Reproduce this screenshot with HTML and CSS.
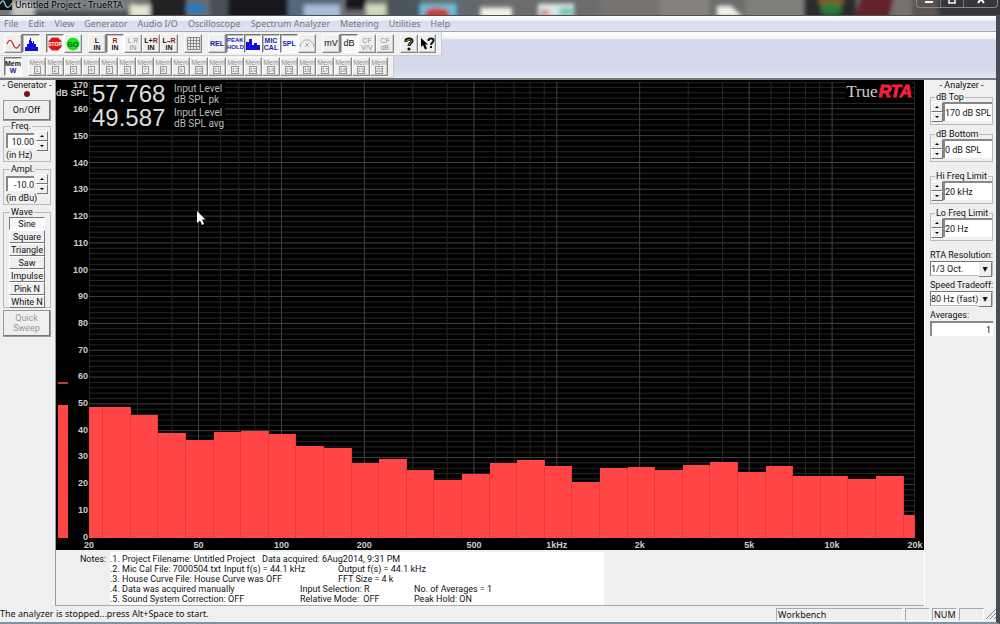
FILE: index.html
```html
<!DOCTYPE html>
<html lang="en">
<head>
  <meta charset="UTF-8">
  <meta name="viewport" content="width=device-width, initial-scale=1.0">
  <title>Untitled Project - TrueRTA</title>
  <link rel="stylesheet" href="styles.css">
</head>
<body>

  <!-- Title bar -->
  <header class="titlebar">
    <svg class="glass" viewBox="0 0 1000 16" preserveAspectRatio="none" aria-hidden="true">
      <defs>
        <filter id="soft" x="-5%" y="-50%" width="110%" height="200%"><feGaussianBlur stdDeviation="2"/></filter>
      </defs>
      <rect width="1000" height="16" fill="#6c6c6c"/>
      <g filter="url(#soft)">
        <rect x="-5" y="-4" width="140" height="24" fill="#74777c"/>
        <rect x="12" y="2" width="22" height="16" fill="#c3c6bd"/>
        <rect x="34" y="12" width="100" height="8" fill="#45484e"/>
        <rect x="130" y="5" width="20" height="13" fill="#e2e8d2"/>
        <rect x="150" y="-4" width="36" height="24" fill="#202124"/>
        <ellipse cx="196" cy="9" rx="10" ry="6" fill="#2d78bd"/>
        <rect x="210" y="-4" width="20" height="24" fill="#4a5058"/>
        <rect x="228" y="-4" width="60" height="24" fill="#17181b"/>
        <rect x="288" y="-4" width="54" height="24" fill="#55677b"/>
        <rect x="304" y="5" width="36" height="14" fill="#a9bdd8"/>
        <rect x="346" y="-4" width="20" height="14" fill="#17181b"/>
        <rect x="366" y="4" width="20" height="14" fill="#cfdabc"/>
        <rect x="387" y="-4" width="34" height="24" fill="#4c545c"/>
        <rect x="420" y="4" width="36" height="14" fill="#62c2df"/>
        <ellipse cx="437" cy="14" rx="13" ry="6" fill="#cb3b3b"/>
        <rect x="456" y="-4" width="26" height="24" fill="#5f6970"/>
        <rect x="481" y="8" width="31" height="12" fill="#f2f2e6"/>
        <rect x="538" y="4" width="36" height="14" fill="#d9ebee"/>
        <ellipse cx="545" cy="13" rx="5" ry="3" fill="#dd7a6d"/>
        <ellipse cx="566" cy="12" rx="8" ry="4" fill="#6cc5a6"/>
        <rect x="600" y="-4" width="60" height="24" fill="#777371"/>
        <rect x="660" y="-4" width="50" height="24" fill="#85827e"/>
        <path d="M717 6h14l12 12h-26z" fill="#f0f4e8"/>
        <rect x="745" y="-4" width="60" height="24" fill="#807e7a"/>
        <rect x="804" y="-4" width="52" height="24" fill="#2c2a29"/>
        <ellipse cx="831" cy="2" rx="13" ry="6" fill="#7a6030"/>
        <ellipse cx="831" cy="10" rx="11" ry="6" fill="#257a3c"/>
        <path d="M862 -4h32l-6 24h-34z" fill="#64202a"/>
        <rect x="894" y="-4" width="30" height="24" fill="#77706c"/>
        <rect x="912" y="-4" width="26" height="24" fill="#5b5552"/>
        <rect x="938" y="-4" width="70" height="24" fill="#34363a"/>
      </g>
    </svg>
    <svg class="app-icon" width="12" height="10" viewBox="0 0 12 10" aria-hidden="true">
      <rect width="12" height="10" fill="#0c1416"/>
      <path d="M0 4c2-4 4-4 5 0s4 5 7-1" fill="none" stroke="#7fc4cc" stroke-width="1.3"/>
    </svg>
    <h1>Untitled Project - TrueRTA</h1>
    <div class="window-buttons">
      <button aria-label="Minimize"><svg width="8" height="8" viewBox="0 0 8 8"><path d="M0 1h8v2H0z" fill="#fff"/></svg></button>
      <button aria-label="Maximize"><svg width="8" height="8" viewBox="0 0 8 8"><path d="M1 0v3h6V0" fill="none" stroke="#fff" stroke-width="1.5"/></svg></button>
      <button class="wide" aria-label="Close"><svg width="8" height="8" viewBox="0 0 8 8"><path d="M4 -1l3 4M4 -1L1 3" stroke="#fff" stroke-width="2"/></svg></button>
    </div>
  </header>

  <div class="window">
    <nav class="menu">
      <a href="#">File</a>
      <a href="#">Edit</a>
      <a href="#">View</a>
      <a href="#">Generator</a>
      <a href="#">Audio I/O</a>
      <a href="#">Oscilloscope</a>
      <a href="#">Spectrum Analyzer</a>
      <a href="#">Metering</a>
      <a href="#">Utilities</a>
      <a href="#">Help</a>
    </nav>

    <!-- Toolbars -->
    <div class="toolbars">
      <div class="toolbar">
        <div class="group">
          <button aria-label="Oscilloscope"><svg width="15" height="12" viewBox="0 0 15 12"><path d="M1 6c2-5 4-5 6 0s4 6 7 0" fill="none" stroke="#c22" stroke-width="1.1"/></svg></button>
          <button class="on" aria-label="Spectrum"><svg width="15" height="14" viewBox="0 0 15 14"><path d="M1 14V10h2V7h2V3h1V1h1v3h1v2h1V4h1v3h2v3h2v4z" fill="#1010d8"/></svg></button>
        </div>
        <div class="group">
          <button class="on" aria-label="Stop"><svg width="14" height="14" viewBox="0 0 14 14"><path d="M4 0.5h6l3.500 3.500v6L10 13.500H4L0.500 10V4z" fill="#d81818"/><text x="7" y="9" text-anchor="middle" class="sign white">STOP</text></svg></button>
          <button aria-label="Go"><svg width="14" height="14" viewBox="0 0 14 14"><circle cx="7" cy="7" r="6.5" fill="#20e020"/><text x="7" y="9.5" text-anchor="middle" class="sign big">GO</text></svg></button>
        </div>
        <div class="group">
          <button>L<br>IN</button>
          <button class="on"><span class="red">R</span><br>IN</button>
          <button disabled>L R<br>IN</button>
          <button>L+<span class="red">R</span><br>IN</button>
          <button>L–<span class="red">R</span><br>IN</button>
        </div>
        <div class="group">
          <button aria-label="Grid"><svg width="13" height="13" viewBox="0 0 13 13"><path d="M0.5 0.5h12v12h-12zM3.5 0v13M6.5 0v13M9.5 0v13M0 3.5h13M0 6.5h13M0 9.5h13" fill="none" stroke="#888"/></svg></button>
        </div>
        <div class="group">
          <button class="blue">REL</button>
          <button class="on blue tiny">PEAK<br>HOLD</button>
          <button class="on" aria-label="Bar graph"><svg width="14" height="12" viewBox="0 0 14 12"><path d="M0 12V4h3V1h3v6h2V5h3v2h3v5z" fill="#1010d8"/></svg></button>
          <button class="on blue">MIC<br>CAL</button>
          <button class="on blue">SPL</button>
          <button disabled aria-label="Weighting"><svg width="14" height="12" viewBox="0 0 14 12"><path d="M0.5 9V6l4-4h5l4 4v3M5 5l4 4M9 5L5 9" fill="none" stroke="#aaa"/></svg></button>
        </div>
        <div class="group">
          <button class="unit">mV</button>
          <button class="on unit">dB</button>
          <button disabled>CF<br>V/V</button>
          <button disabled>CF<br>dB</button>
        </div>
        <div class="group">
          <button aria-label="About"><svg width="12" height="14" viewBox="0 0 12 14"><path d="M3 5V3.5C3 1.5 9 1.5 9 4c0 2-3 2-3 5" fill="none" stroke="#111" stroke-width="3"/><path d="M3 4.500C3 2 8.500 2 8.500 4.200c0 1.500-2.500 2-2.500 4.300" fill="none" stroke="#a8a040" stroke-width="1"/><circle cx="6" cy="12" r="1.6" fill="#111"/></svg></button>
          <button aria-label="Context help"><svg width="15" height="14" viewBox="0 0 15 14"><path d="M1 1v9l2-2 2 4.500 2-1L5.200 7.500H8z" fill="#000"/><path d="M8.500 4V3c0-2 5-2 5 .5C13.500 5.500 11 5.500 11 8" fill="none" stroke="#112" stroke-width="2"/><rect x="10" y="9" width="2" height="2" fill="#112"/></svg></button>
        </div>
      </div>
      <div class="toolbar memory">
        <div class="group">
          <button class="on">Mem<br><span class="navy">W</span></button>
        </div>
        <div class="group" id="memories"></div>
      </div>
    </div>

    <main class="workspace">
      <!-- Generator -->
      <section class="generator">
        <h2>- Generator -</h2>
        <span class="led"></span>
        <button class="push">On/Off</button>

        <fieldset>
          <legend><label for="freq">Freq.</label></legend>
          <div class="spinner">
            <input type="text" id="freq" value="10.00">
            <div class="arrows">
              <button class="up" aria-label="Frequency up"></button>
              <button class="down" aria-label="Frequency down"></button>
            </div>
          </div>
          <p>(in Hz)</p>
        </fieldset>

        <fieldset>
          <legend><label for="ampl">Ampl.</label></legend>
          <div class="spinner">
            <input type="text" id="ampl" value="-10.0">
            <div class="arrows">
              <button class="up" aria-label="Amplitude up"></button>
              <button class="down" aria-label="Amplitude down"></button>
            </div>
          </div>
          <p>(in dBu)</p>
        </fieldset>

        <fieldset class="wave">
          <legend>Wave</legend>
          <button class="on">Sine</button>
          <button>Square</button>
          <button>Triangle</button>
          <button>Saw</button>
          <button>Impulse</button>
          <button>Pink N</button>
          <button>White N</button>
        </fieldset>
        <button class="push sweep" disabled>Quick<br>Sweep</button>
      </section>

      <!-- Spectrum and notes -->
      <section class="center">
        <div class="plot">
          <div class="meter">
            <div class="level" style="height:29.2%"></div>
            <div class="peak" style="bottom:33.7%"></div>
          </div>
          <div class="y-axis" id="y-axis"></div>
          <div class="chart">
            <svg class="grid" id="grid" viewBox="0 0 3 170" preserveAspectRatio="none" aria-hidden="true"></svg>
            <div class="bars" id="bars"></div>
            <div class="readout">
              <span class="value">57.768</span>
              <span class="caption">Input Level<br>dB SPL pk</span>
              <span class="value">49.587</span>
              <span class="caption">Input Level<br>dB SPL avg</span>
            </div>
            <div class="logo"><span>True</span><b>RTA</b></div>
            <svg class="cursor" width="10" height="16" viewBox="0 0 10 16" aria-hidden="true"><path d="M1 1v12l3-2.500L6 15l2-1-2-4.500h3.500z" fill="#fff"/></svg>
          </div>
          <div class="x-axis" id="x-axis"></div>
        </div>
        <div class="notes">
          <label for="notes">Notes:</label>
          <textarea id="notes" rows="5" spellcheck="false" readonly>.1. Project Filename: Untitled Project	Data acquired: 6Aug2014, 9:31 PM
.2. Mic Cal File: 7000504.txt	Input f(s) = 44.1 kHz	Output f(s) = 44.1 kHz
.3. House Curve File: House Curve was OFF		FFT Size = 4 k
.4. Data was acquired manually		Input Selection: R		No. of Averages = 1
.5. Sound System Correction: OFF		Relative Mode:  OFF	Peak Hold: ON</textarea>
        </div>
      </section>

      <!-- Analyzer -->
      <section class="analyzer">
        <h2>- Analyzer -</h2>
        <fieldset>
          <legend><label for="db-top">dB Top</label></legend>
          <div class="spinner">
            <div class="arrows">
              <button class="up" aria-label="dB top up"></button>
              <button class="down" aria-label="dB top down"></button>
            </div>
            <input type="text" id="db-top" value="170 dB SPL">
          </div>
        </fieldset>
        <fieldset>
          <legend><label for="db-bottom">dB Bottom</label></legend>
          <div class="spinner">
            <div class="arrows">
              <button class="up" aria-label="dB bottom up"></button>
              <button class="down" aria-label="dB bottom down"></button>
            </div>
            <input type="text" id="db-bottom" value="0 dB SPL">
          </div>
        </fieldset>
        <fieldset class="spaced">
          <legend><label for="hi-freq">Hi Freq Limit</label></legend>
          <div class="spinner">
            <div class="arrows">
              <button class="up" aria-label="High limit up"></button>
              <button class="down" aria-label="High limit down"></button>
            </div>
            <input type="text" id="hi-freq" value="20 kHz">
          </div>
        </fieldset>
        <fieldset>
          <legend><label for="lo-freq">Lo Freq Limit</label></legend>
          <div class="spinner">
            <div class="arrows">
              <button class="up" aria-label="Low limit up"></button>
              <button class="down" aria-label="Low limit down"></button>
            </div>
            <input type="text" id="lo-freq" value="20 Hz">
          </div>
        </fieldset>

        <div class="field spaced">
          <label for="resolution">RTA Resolution:</label>
          <div class="select">
            <select id="resolution">
              <option>1/3 Oct.</option>
            </select>
          </div>
        </div>
        <div class="field">
          <label for="speed">Speed Tradeoff:</label>
          <div class="select">
            <select id="speed">
              <option>80 Hz (fast)</option>
            </select>
          </div>
        </div>
        <div class="field">
          <label for="averages">Averages:</label>
          <input type="text" id="averages" value="1">
        </div>
      </section>
    </main>

    <footer class="status">
      <p>The analyzer is stopped...press Alt+Space to start.</p>
      <span class="pane workbench">Workbench</span>
      <span class="pane"></span>
      <span class="pane">NUM</span>
      <span class="pane"></span>
      <svg class="grip" width="10" height="10" viewBox="0 0 10 10" aria-hidden="true"><path d="M0 10L10 0M4 10l6-6M8 10l2-2" stroke="#888"/></svg>
    </footer>
  </div>

  <script src="script.js"></script>
</body>
</html>
```
FILE: styles.css
```css
* { box-sizing: border-box; }
body { margin: 0; min-height: 100vh; display: flex; flex-direction: column; background: #efefef; color: #111; font: 9px/10px Roboto, "Liberation Sans", sans-serif; }
h1, h2, p { margin: 0; font-weight: normal; }
button, input, select, textarea { font: inherit; color: inherit; margin: 0; padding: 0; border-radius: 0; }
button { background: #efefef; border: 1px solid; border-color: #fff #777 #777 #fff; }
button:disabled { color: #999; }
.red { color: #a01818; }
.navy { color: #1818a0; }

/* title bar */
.titlebar { position: relative; display: flex; height: 16px; overflow: hidden; border-bottom: 1px solid #4d4f50; }
.glass { position: absolute; top: 0; left: 0; width: 100%; height: 100%; }
.app-icon { position: relative; }
.titlebar h1 { position: relative; flex: 1; padding-left: 3px; font: 9px/9px "Noto Sans", sans-serif; color: #000; text-shadow: 0 0 4px #dde; white-space: nowrap; }
.window-buttons { position: relative; display: flex; height: 8px; margin-right: 2px; border: 1px solid #888; border-top: 0; border-radius: 0 0 4px 4px; }
.window-buttons button { width: 23px; display: flex; justify-content: center; background: none; border: 0; }
.window-buttons button + button { border-left: 1px solid #777; }
.window-buttons button.wide { width: 34px; }

.window { flex: 1; display: flex; flex-direction: column; border-right: 4px solid #474c54; border-bottom: 2px solid #7d93a8; }

/* menu */
.menu { display: flex; gap: 10px; height: 16px; padding: 0 4px; background: linear-gradient(#fff, #eef1f9 30%, #d8def0 35%, #dfe4f3); border-bottom: 1px solid #aaa; }
.menu a { color: #777; text-decoration: none; font: 9px/15px "Noto Sans", sans-serif; white-space: nowrap; }

/* toolbars */
.toolbars { display: flex; flex-direction: column; align-items: flex-start; background: linear-gradient(#fff, #f0f3fa 14%, #d4d9ec 17%, #d4d9ec 80%, #e2e6f4); border-bottom: 2px solid #777; }
.toolbar { display: flex; gap: 6px; height: 24px; padding: 2px 5px 2px 4px; background: #f0f0f0; border-right: 1px solid #ccc; border-bottom: 1px solid #ccc; }
.toolbar.memory { height: 22px; padding-top: 1px; }
.group { display: flex; }
.toolbar button { width: 18px; height: 19px; display: block; text-align: center; font: bold 7px/7px "Liberation Sans", sans-serif; border-right-color: #888; border-bottom-color: #888; box-shadow: inset -1px -1px #ccc; white-space: nowrap; }
.toolbar button.on { background: #f8f8f8; border-color: #777 #fff #fff #777; box-shadow: inset 1px 1px #bbb; }
.toolbar button:disabled { font-weight: normal; color: #8c8c8c; }
.toolbar button.blue { color: #2020b0; }
.toolbar button.tiny { font-size: 6px; }
.toolbar button.unit { font-size: 9px; font-weight: normal; }
.toolbar svg { display: block; margin: 0 auto; }
.memory .slot { display: inline-block; min-width: 7px; height: 8px; font-size: 6px; line-height: 6px; border: 1px solid #999; }
.sign { font: bold 5px "Liberation Sans", sans-serif; fill: #052; }
.sign.big { font-size: 7px; }
.sign.white { fill: #fff; }

/* workspace */
.workspace { flex: 1; display: flex; }
.generator { width: 55px; padding: 0 4px 0 3px; display: flex; flex-direction: column; align-items: stretch; }
.generator h2, .analyzer h2 { font-size: 9px; line-height: 11px; text-align: center; white-space: nowrap; }
.generator h2 { margin: 0 -3px; }
.led { width: 6px; height: 6px; margin: 0 auto 3px; border-radius: 50%; background: #801018; }
.push { height: 21px; border-width: 1px 2px 2px 1px; outline: 1px solid #999; outline-offset: -1px; }
.sweep { height: 27px; margin-top: 2px; }
fieldset { min-width: 0; margin: 0; padding: 0 2px 1px; border: 1px solid #bbb; }
legend { margin-left: 4px; padding: 0 1px; line-height: 10px; white-space: nowrap; }
.generator fieldset { height: 41px; margin-bottom: 2px; }
.generator fieldset.wave { height: 101px; margin-bottom: 0; }
.spinner { display: flex; gap: 2px; }
.spinner input, .field input { min-width: 0; width: 100%; background: #fff; border: 0; border-top: 2px solid #888; border-left: 2px solid #888; }
.generator .spinner input { height: 15px; margin-top: 2px; flex: 1; text-align: right; }
.generator p { line-height: 9px; white-space: nowrap; }
.arrows { flex: none; width: 12px; display: flex; flex-direction: column; }
.arrows button { height: 10px; display: flex; align-items: center; justify-content: center; }
.arrows button::after { content: ""; border: 2px solid transparent; }
.arrows .up::after { border-top: 0; border-bottom-color: #000; }
.arrows .down::after { border-bottom: 0; border-top-color: #000; }
.wave button { display: block; width: 36px; height: 13px; margin: 0 auto; white-space: nowrap; }
.wave button.on { background: #f8f8f8; border-color: #777 #fff #fff #777; }

.center { flex: 1; display: flex; flex-direction: column; min-width: 0; border-left: 1px solid #999; border-bottom: 1px solid #aaa; }
.plot { flex: 1; display: grid; grid-template-columns: 12px 21px 1fr 9px; grid-template-rows: 1fr 12px; padding-top: 2px; background: #000; }
.meter { grid-column: 1; grid-row: 1; position: relative; width: 10px; margin-left: 2px; display: flex; align-items: flex-end; }
.level { width: 100%; background: #ff4545; }
.peak { position: absolute; width: 100%; height: 2px; background: #c03c3c; }
.y-axis { grid-column: 2; grid-row: 1 / 3; position: relative; display: flex; flex-direction: column; color: #ccc; font: bold 9px/10px "Liberation Sans", sans-serif; padding-right: 1px; margin-top: -2px; }
.y-axis span { flex: 1; display: flex; align-items: center; justify-content: flex-end; }
.y-axis span:first-child { flex: 0 0 16px; align-items: flex-start; }
.y-axis em { position: absolute; top: 8px; right: 1px; font-style: normal; white-space: nowrap; }
.chart { grid-column: 3; grid-row: 1; position: relative; min-height: 0; }
.grid, .bars { position: absolute; top: 0; left: 0; width: 100%; height: 100%; }
.grid line { stroke: #262626; vector-effect: non-scaling-stroke; }
.grid line.major { stroke: #424242; }
.bars { display: flex; align-items: flex-end; }
.bars div { background: #ff4545; border-right: 1px solid #ee3838; }
.readout { position: absolute; top: 0; left: 3px; display: grid; grid-template-columns: 81px auto; color: #ddd; background: #000; }
.readout .value { font: 24px/24px "Liberation Sans", sans-serif; }
.readout .caption { padding: 1px 1px 0; font: 10px/11px Roboto, sans-serif; color: #bbb; }
.logo { position: absolute; top: 0; right: 3px; display: flex; gap: 1px; font: 17px/20px "Liberation Serif", serif; color: #ccc; background: #000; }
.logo b { font: italic bold 17px/20px "Liberation Sans", sans-serif; color: #f0203c; -webkit-text-stroke: 1px #f0203c; }
.cursor { position: absolute; left: 13%; top: 28%; }
.x-axis { grid-column: 3; grid-row: 2; position: relative; color: #ccc; font: bold 9px/14px "Liberation Sans", sans-serif; }
.x-axis span { position: absolute; transform: translateX(-50%); }
.notes { display: flex; padding-top: 2px; }
.notes label { width: 54px; padding: 2px 4px 0 0; text-align: right; }
.notes textarea { width: 494px; height: 53px; line-height: 10px; padding: 2px 0 1px; border: 0; resize: none; background: #fff; overflow: hidden; tab-size: 38px; white-space: pre; outline: 0; }

.analyzer { width: 72px; padding: 0 3px 0 5px; border-left: 1px solid #fff; }
.analyzer h2 { margin-bottom: 1px; }
.analyzer fieldset { height: 33px; margin-bottom: 4px; padding: 0; }
.analyzer .spaced { margin-top: 9px; }
.analyzer .spinner { gap: 0; }
.analyzer .spinner input { height: 19px; }
.field { display: flex; flex-direction: column; margin-bottom: 4px; }
.field label { line-height: 11px; white-space: nowrap; }
.field input { height: 15px; text-align: right; padding-right: 2px; }
.select { position: relative; display: flex; }
.select select { width: 100%; height: 15px; padding: 0; appearance: none; background: #fff; border: 1px solid; border-color: #777 #bbb #bbb #777; line-height: 12px; }
.select::after { content: "▾"; position: absolute; top: 1px; right: 1px; width: 12px; height: 13px; font: 10px/11px "DejaVu Sans", sans-serif; text-align: center; background: #efefef; border: 1px solid; border-color: #fff #777 #777 #fff; pointer-events: none; }

/* status bar */
.status { display: flex; align-items: center; gap: 2px; height: 16px; font: 9px/14px "Noto Sans", sans-serif; }
.status p { flex: 1; white-space: nowrap; }
.pane { width: 25px; height: 13px; padding-left: 1px; line-height: 12px; border: 1px solid; border-color: #aaa #fff #fff #aaa; }
.pane.workbench { width: 127px; }
```
FILE: script.js
```javascript
const levels = [49, 48.7, 46, 39, 36.7, 39.5, 40, 38.7, 34.3, 33.5, 28, 29.5, 25.5, 21.5, 24, 28, 29, 27, 21, 26, 26.5, 25.3, 27.3, 28.2, 24.5, 26.8, 23, 23, 22, 23, 8.7];
const dbTop = 170;
const lowFreq = 20;
const freqLabels = { 20: '20', 50: '50', 100: '100', 200: '200', 500: '500', 1000: '1kHz', 2000: '2k', 5000: '5k', 10000: '10k', 20000: '20k' };

// memory buttons
const memories = document.getElementById('memories');
for (let i = 1; i <= 20; i++) {
  memories.innerHTML += `<button disabled>Mem<br><span class="slot">${i}</span></button>`;
}

// grid
let lines = '';
for (let db = 0; db <= dbTop; db += 2) {
  const cls = db % 10 === 0 ? 'major' : '';
  lines += `<line class="${cls}" x1="0" x2="3" y1="${dbTop - db}" y2="${dbTop - db}"/>`;
}
for (let decade = 10; decade <= 10000; decade *= 10) {
  for (let n = 1; n < 10; n++) {
    const f = n * decade;
    if (f < lowFreq || f > 20000) continue;
    const x = Math.log10(f / lowFreq);
    lines += `<line class="${freqLabels[f] ? 'major' : ''}" x1="${x}" x2="${x}" y1="0" y2="${dbTop}"/>`;
  }
}
document.getElementById('grid').innerHTML = lines;

// third octave bars, the first and last are cut by the frequency limits
document.getElementById('bars').innerHTML = levels.map((level, i) => {
  const share = i === 0 ? 0.5 : i === levels.length - 1 ? 0.4 : 1;
  return `<div style="flex:${share};height:${level / dbTop * 100}%"></div>`;
}).join('');

// axes
let yLabels = '';
for (let db = dbTop; db >= 0; db -= 10) {
  yLabels += `<span>${db}</span>`;
}
document.getElementById('y-axis').innerHTML = yLabels + '<em>dB SPL</em>';

document.getElementById('x-axis').innerHTML = Object.keys(freqLabels).map(f =>
  `<span style="left:${Math.log10(f / lowFreq) / 3 * 100}%">${freqLabels[f]}</span>`
).join('');
```
